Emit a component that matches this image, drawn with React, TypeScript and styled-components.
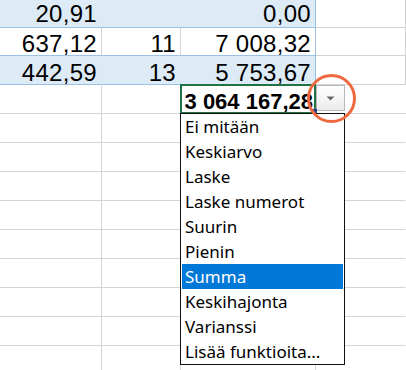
import React from "react";
import styled, { createGlobalStyle } from "styled-components";

const GlobalStyle = createGlobalStyle`
  html, body { margin: 0; padding: 0; background: #ffffff; }
  body { overflow: hidden; }
  * { box-sizing: border-box; }
`;

const GRID = "#d4d4d4";
const TABLE_LINE = "#9bc2e6";
const BAND = "#ddebf7";

const Sheet = styled.div`
  position: relative;
  width: 406px;
  height: 370px;
  overflow: hidden;
  font-family: "Liberation Sans", Arial, sans-serif;
`;

const Grid = styled.div`
  display: grid;
  grid-template-columns: 102px 79px 135px 1fr;
`;

const Cell = styled.div<{
  $h: number;
  $fill?: string;
  $right: string;
  $bottom: string;
  $bold?: boolean;
  $lift?: number;
}>`
  height: ${(p) => p.$h}px;
  background: ${(p) => p.$fill || "#ffffff"};
  border-right: 1px solid ${(p) => p.$right};
  border-bottom: 1px solid ${(p) => p.$bottom};
  display: flex;
  align-items: flex-end;
  justify-content: flex-end;
  padding: 0 4px ${(p) => p.$lift || 0}px 0;
  font-size: ${(p) => (p.$bold ? 22 : 24)}px;
  font-weight: ${(p) => (p.$bold ? 700 : 400)};
  letter-spacing: ${(p) => (p.$bold ? 0 : 0.3)}px;
  line-height: 23px;
  color: #000;
  white-space: nowrap;
`;

const TotalCell = styled(Cell)`
  position: relative;
  overflow: visible;
  padding-right: 2px;
`;

const ClipText = styled.span`
  display: block;
  overflow: hidden;
`;

const SelectionFrame = styled.div`
  position: absolute;
  left: -1px;
  top: -1px;
  right: -1px;
  bottom: -1px;
  border: 2px solid #217346;
  pointer-events: none;
`;

const FillHandle = styled.div`
  position: absolute;
  right: -2px;
  bottom: -2px;
  width: 5px;
  height: 6px;
  background: #24408e;
  border-bottom: 2px solid #217346;
`;

const ButtonCell = styled.div<{ $h: number }>`
  height: ${(p) => p.$h}px;
  border-bottom: 1px solid ${GRID};
  display: flex;
  align-items: flex-start;
`;

const DropButton = styled.div`
  width: 29px;
  height: 26px;
  border: 1px solid #b9b9b9;
  background: linear-gradient(#ffffff, #ebebeb);
  display: flex;
  align-items: center;
  justify-content: center;
`;

const List = styled.ul`
  position: absolute;
  left: 180px;
  top: 113px;
  width: 165px;
  margin: 0;
  padding: 0 1px;
  list-style: none;
  background: #ffffff;
  border: 1px solid #111111;
  font-family: "Noto Sans", "Open Sans", sans-serif;
  font-size: 17px;
`;

const Item = styled.li<{ $active?: boolean }>`
  height: 25px;
  line-height: 25px;
  padding-left: 3px;
  background: ${(p) => (p.$active ? "#0078d7" : "transparent")};
  color: ${(p) => (p.$active ? "#ffffff" : "#000000")};
  white-space: nowrap;
`;

const Ring = styled.div`
  position: absolute;
  left: 307px;
  top: 74px;
  width: 49px;
  height: 49px;
  border-radius: 50%;
  border: 3.5px solid #ee6a3e;
  pointer-events: none;
`;

type RowDef = {
  h: number;
  lift: number;
  band?: boolean;
  cells: string[];
};

const rows: RowDef[] = [
  { h: 28, lift: 2, band: true, cells: ["20,91", "", "0,00", ""] },
  { h: 28, lift: 0, cells: ["637,12", "11", "7 008,32", ""] },
  { h: 29, lift: 0, band: true, cells: ["442,59", "13", "5 753,67", ""] },
];

const emptyRows = Array.from({ length: 9 }, () => 29);

const items = [
  "Ei mitään",
  "Keskiarvo",
  "Laske",
  "Laske numerot",
  "Suurin",
  "Pienin",
  "Summa",
  "Keskihajonta",
  "Varianssi",
  "Lisää funktioita...",
];

const Caret = () => (
  <svg width="9" height="5" viewBox="0 0 9 5">
    <path d="M0.5 0.5 L8.5 0.5 L4.5 4.5 Z" fill="#6b6b6b" />
  </svg>
);

export default function App() {
  return (
    <>
      <GlobalStyle />
      <Sheet>
        <Grid>
          {rows.map((r, ri) =>
            r.cells.map((c, ci) => {
              const inTable = ci < 3;
              const fill = inTable && r.band ? BAND : "#ffffff";
              let right = GRID;
              if (inTable) {
                if (ci === 2) right = TABLE_LINE;
                else right = r.band ? BAND : GRID;
              }
              const bottom = inTable ? TABLE_LINE : GRID;
              return (
                <Cell
                  key={`${ri}-${ci}`}
                  $h={r.h}
                  $lift={r.lift}
                  $fill={fill}
                  $right={right}
                  $bottom={bottom}
                >
                  {c}
                </Cell>
              );
            })
          )}
          <Cell $h={29} $right={GRID} $bottom={GRID} />
          <Cell $h={29} $right={GRID} $bottom={GRID} />
          <TotalCell $h={29} $right={GRID} $bottom={GRID} $bold>
            <ClipText>3 064 167,28</ClipText>
            <SelectionFrame />
            <FillHandle />
          </TotalCell>
          <ButtonCell $h={29}>
            <DropButton>
              <Caret />
            </DropButton>
          </ButtonCell>
          {emptyRows.map((h, i) =>
            [0, 1, 2, 3].map((ci) => (
              <Cell
                key={`e-${i}-${ci}`}
                $h={h}
                $right={ci === 3 ? "transparent" : GRID}
                $bottom={GRID}
              />
            ))
          )}
        </Grid>
        <List>
          {items.map((it) => (
            <Item key={it} $active={it === "Summa"}>
              {it}
            </Item>
          ))}
        </List>
        <Ring />
      </Sheet>
    </>
  );
}
